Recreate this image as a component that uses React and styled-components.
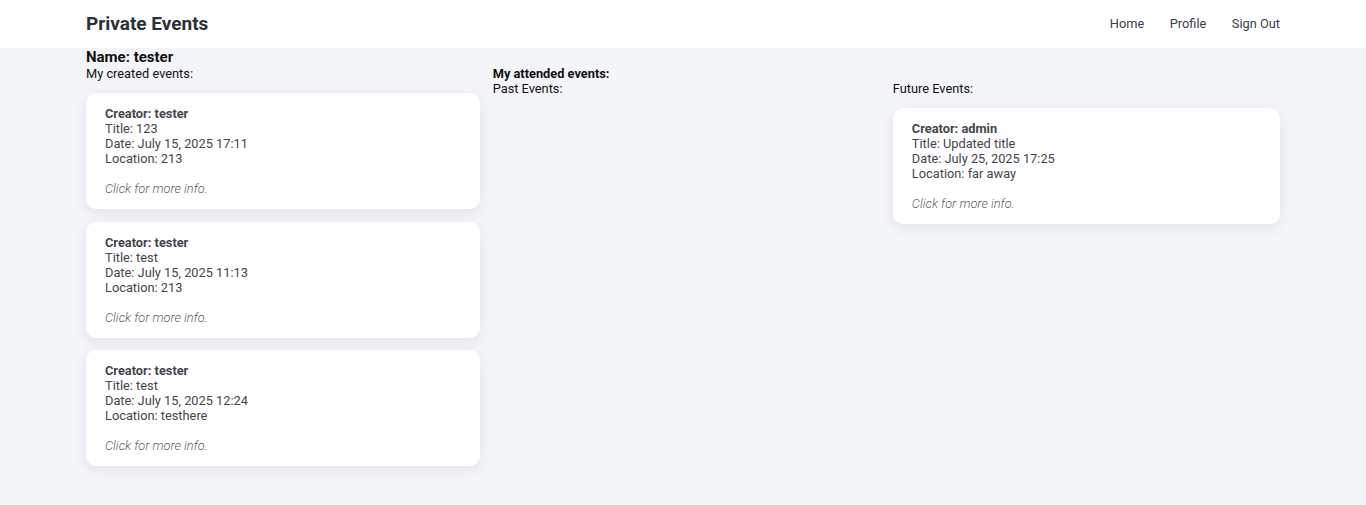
import React from "react";
import styled, { createGlobalStyle } from "styled-components";

const Global = createGlobalStyle`
  html, body { margin: 0; padding: 0; }
  body {
    background: #f4f5f9;
    font-family: Roboto, "Noto Sans", Arial, sans-serif;
    color: #111;
    min-height: 505px;
  }
`;

const Header = styled.header`
  background: #fff;
  height: 48px;
`;

const HeaderInner = styled.div`
  width: 1194px;
  margin: 0 auto;
  height: 100%;
  display: flex;
  align-items: center;
  justify-content: space-between;
`;

const Brand = styled.div`
  font-size: 19px;
  font-weight: 700;
  color: #2b2f36;
  margin-top: -2px;
`;

const Nav = styled.nav`
  display: flex;
  gap: 25.5px;
  margin-top: -1px;
`;

const NavLink = styled.a`
  font-size: 12.8px;
  color: #3c4048;
  text-decoration: none;
`;

const Main = styled.main`
  width: 1194px;
  margin: 0 auto;
`;

const Name = styled.h2`
  margin: 1px 0 0;
  font-size: 15px;
  font-weight: 700;
  line-height: 16.5px;
`;

const Row = styled.div`
  display: flex;
  gap: ${(p) => p.$gap}px;
`;

const Column = styled.section`
  flex: ${(p) => p.$grow};
  min-width: 0;
`;

const Label = styled.div`
  font-size: 12.8px;
  line-height: 15px;
  font-weight: ${(p) => (p.$bold ? 700 : 400)};
`;

const CardList = styled.div`
  display: flex;
  flex-direction: column;
  gap: 12.5px;
  margin-top: 12.5px;
`;

const Card = styled.div`
  background: #fff;
  border-radius: 10px;
  padding: 13px 19px;
  box-shadow: 0 4px 14px rgba(20, 30, 60, 0.08);
  font-size: 12.8px;
  line-height: 15px;
  color: #43464c;
  cursor: pointer;
`;

const Line = styled.div`
  font-weight: ${(p) => (p.$bold ? 700 : 400)};
`;

const More = styled.div`
  margin-top: 15px;
  font-style: italic;
  font-weight: 300;
  color: #5d6067;
`;

function EventCard({ creator, title, date, location }) {
  return (
    <Card>
      <Line $bold>Creator: {creator}</Line>
      <Line>Title: {title}</Line>
      <Line>Date: {date}</Line>
      <Line>Location: {location}</Line>
      <More>Click for more info.</More>
    </Card>
  );
}

const created = [
  { creator: "tester", title: "123", date: "July 15, 2025 17:11", location: "213" },
  { creator: "tester", title: "test", date: "July 15, 2025 11:13", location: "213" },
  { creator: "tester", title: "test", date: "July 15, 2025 12:24", location: "testhere" },
];

const future = [
  { creator: "admin", title: "Updated title", date: "July 25, 2025 17:25", location: "far away" },
];

export default function App() {
  return (
    <>
      <Global />
      <Header>
        <HeaderInner>
          <Brand>Private Events</Brand>
          <Nav>
            <NavLink href="#">Home</NavLink>
            <NavLink href="#">Profile</NavLink>
            <NavLink href="#">Sign Out</NavLink>
          </Nav>
        </HeaderInner>
      </Header>
      <Main>
        <Name>Name: tester</Name>
        <Row $gap={13}>
          <Column $grow={1}>
            <Label>My created events:</Label>
            <CardList>
              {created.map((e, i) => (
                <EventCard key={i} {...e} />
              ))}
            </CardList>
          </Column>
          <Column $grow={2}>
            <Label $bold>My attended events:</Label>
            <Row $gap={13}>
              <Column $grow={1}>
                <Label>Past Events:</Label>
              </Column>
              <Column $grow={1}>
                <Label>Future Events:</Label>
                <CardList>
                  {future.map((e, i) => (
                    <EventCard key={i} {...e} />
                  ))}
                </CardList>
              </Column>
            </Row>
          </Column>
        </Row>
      </Main>
    </>
  );
}
